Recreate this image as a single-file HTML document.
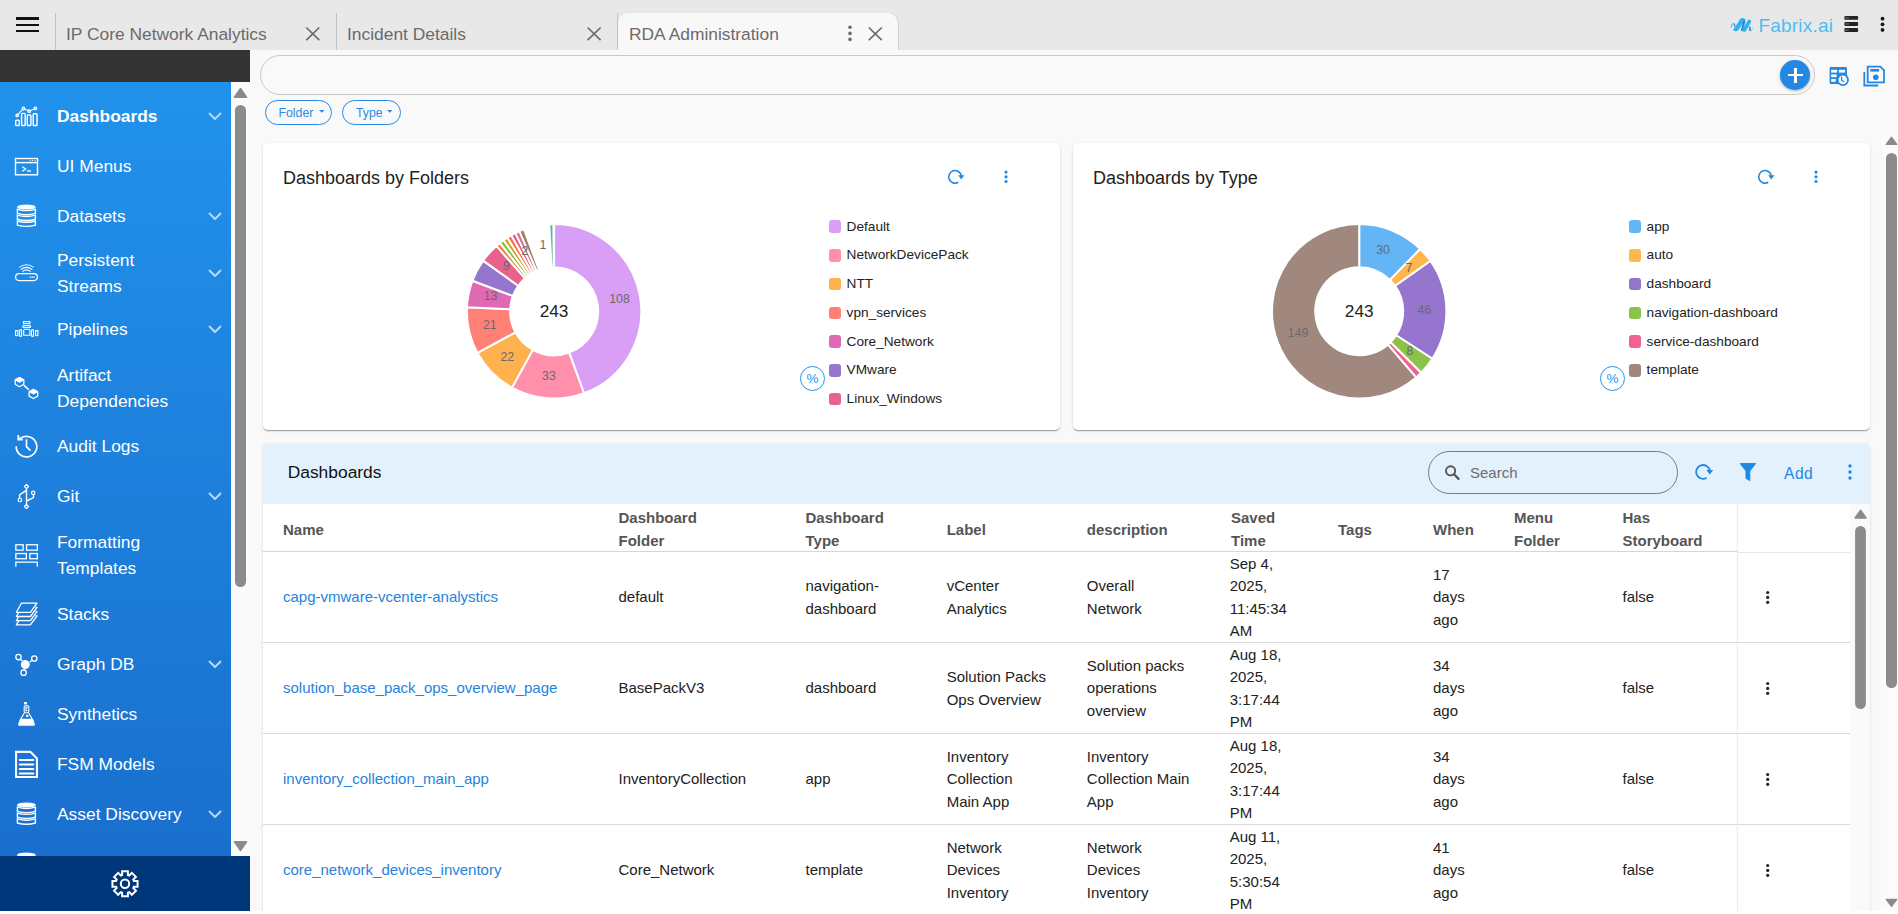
<!DOCTYPE html>
<html><head><meta charset="utf-8">
<style>
*{box-sizing:border-box;margin:0;padding:0}
html,body{width:1898px;height:914px;overflow:hidden;background:#fff;font-family:"Liberation Sans",sans-serif}
.abs{position:absolute}
#top{position:absolute;left:0;top:0;width:1898px;height:50px;background:#e8e8e8}
.hb{position:absolute;left:16px;width:23px;height:2.6px;background:#111}
.sep{position:absolute;top:13px;width:1.2px;height:37px;background:#bfc5ca}
.tabt{position:absolute;top:23.5px;font-size:17.4px;color:#6b6b6b;white-space:nowrap;line-height:20px}
.x{position:absolute;width:14px;height:14px}
#side{position:absolute;left:0;top:50px;width:250px;height:861px;background:#fafafa}
#sdark{position:absolute;left:0;top:50px;width:250px;height:32px;background:#343434}
#sblue{position:absolute;left:0;top:82px;width:231px;height:774px;background:linear-gradient(#2192ec,#1a6fcd)}
#sfoot{position:absolute;left:0;top:856px;width:250px;height:55px;background:#00377a}
.mi{position:absolute;left:57px;color:#fff;font-size:17.4px;line-height:26px;white-space:nowrap}
.chev{position:absolute;left:208px;width:14px;height:8px}
.ic{position:absolute;left:13px}
#content{position:absolute;left:250px;top:50px;width:1648px;height:864px;background:#f9f9f9}
.pill{position:absolute;top:100px;height:25px;border:1.3px solid #2a8be6;border-radius:13px;color:#2a8be6;font-size:12.3px;line-height:25.3px;padding-left:11px}
.card{position:absolute;background:#fff;border-radius:5px;box-shadow:0 2px 1px -1px rgba(0,0,0,.2),0 1px 1px 0 rgba(0,0,0,.14),0 1px 3px 0 rgba(0,0,0,.12)}
.ctitle{position:absolute;font-size:18px;color:#222;white-space:nowrap;line-height:20px}
.leg{position:absolute;font-size:13.65px;color:#222;white-space:nowrap;line-height:17px}
.leg i{position:absolute;left:-17.9px;top:2px;width:12.5px;height:12.5px;border-radius:3px}
.th{position:absolute;font-weight:700;color:#555;font-size:15px;line-height:22.7px;white-space:nowrap}
.td{position:absolute;color:#222;font-size:15px;line-height:22.3px;white-space:nowrap}
.lnk{color:#2583de}
.hl{position:absolute;height:1.5px;background:#e2e2e2}
</style></head>
<body>
<div id="top">
  <div class="hb" style="top:17px"></div>
  <div class="hb" style="top:23.5px"></div>
  <div class="hb" style="top:29.8px"></div>
  <div class="sep" style="left:55px"></div>
  <div class="tabt" style="left:66px">IP Core Network Analytics</div>
  <div class="sep" style="left:335.5px"></div>
  <div class="tabt" style="left:347px">Incident Details</div>
  <div class="sep" style="left:616.5px"></div>
  <div class="abs" style="left:618px;top:13px;width:280px;height:37px;background:#f8f8f8;border-radius:10px 10px 0 0;box-shadow:1px 0 0 #cdd1d5"></div>
  <div class="tabt" style="left:629px">RDA Administration</div>
</div>
<div id="side"></div>
<div id="sdark"></div>
<div id="sblue"></div>
<div class="mi" style="top:103.0px;font-weight:700;">Dashboards</div>
<svg class="chev" style="top:112.0px" viewBox="0 0 14 8"><path d="M1 1L7 7L13 1" fill="none" stroke="#b5dbfa" stroke-width="2"/></svg>
<div class="mi" style="top:153.0px;">UI Menus</div>
<div class="mi" style="top:203.0px;">Datasets</div>
<svg class="chev" style="top:212.0px" viewBox="0 0 14 8"><path d="M1 1L7 7L13 1" fill="none" stroke="#b5dbfa" stroke-width="2"/></svg>
<div class="mi" style="top:247.0px;">Persistent<br>Streams</div>
<svg class="chev" style="top:269.0px" viewBox="0 0 14 8"><path d="M1 1L7 7L13 1" fill="none" stroke="#b5dbfa" stroke-width="2"/></svg>
<div class="mi" style="top:316.0px;">Pipelines</div>
<svg class="chev" style="top:325.0px" viewBox="0 0 14 8"><path d="M1 1L7 7L13 1" fill="none" stroke="#b5dbfa" stroke-width="2"/></svg>
<div class="mi" style="top:362.0px;">Artifact<br>Dependencies</div>
<div class="mi" style="top:433.0px;">Audit Logs</div>
<div class="mi" style="top:483.0px;">Git</div>
<svg class="chev" style="top:492.0px" viewBox="0 0 14 8"><path d="M1 1L7 7L13 1" fill="none" stroke="#b5dbfa" stroke-width="2"/></svg>
<div class="mi" style="top:529.0px;">Formatting<br>Templates</div>
<div class="mi" style="top:601.0px;">Stacks</div>
<div class="mi" style="top:651.0px;">Graph DB</div>
<svg class="chev" style="top:660.0px" viewBox="0 0 14 8"><path d="M1 1L7 7L13 1" fill="none" stroke="#b5dbfa" stroke-width="2"/></svg>
<div class="mi" style="top:701.0px;">Synthetics</div>
<div class="mi" style="top:751.0px;">FSM Models</div>
<div class="mi" style="top:801.0px;">Asset Discovery</div>
<svg class="chev" style="top:810.0px" viewBox="0 0 14 8"><path d="M1 1L7 7L13 1" fill="none" stroke="#b5dbfa" stroke-width="2"/></svg>
<svg class="abs" style="left:0;top:0" width="60" height="914" viewBox="0 0 60 914">
<g fill="none" stroke="#fff" stroke-width="1.4">
<!-- Dashboards -->
<rect x="15.7" y="120.2" width="3.6" height="5.3" rx=".8"/>
<rect x="21.6" y="113.4" width="3.6" height="12.1" rx=".8"/>
<rect x="27.3" y="115" width="3.6" height="10.5" rx=".8"/>
<rect x="33.2" y="113.8" width="3.8" height="11.7" rx=".8"/>
<path d="M17.2 115.4L23.5 108.5L29.2 111.2L35.3 108.4" stroke-width="1.1"/>
<circle cx="17.2" cy="115.4" r="1.2" fill="#2192ec"/><circle cx="23.5" cy="108.5" r="1.2" fill="#2192ec"/><circle cx="29.2" cy="111.2" r="1.2" fill="#2192ec"/><circle cx="35.3" cy="108.4" r="1.2" fill="#2192ec"/>
<!-- UI Menus -->
<rect x="15.5" y="158.5" width="22" height="16.3"/>
<path d="M15.5 162.6H37.5"/>
<path d="M22.3 166.8L25.6 169L22.3 171.2" stroke-width="1.3"/>
<path d="M27 171H31" stroke-width="1.3"/>
<circle cx="30.2" cy="160.6" r=".6" fill="#fff" stroke="none"/><circle cx="32.6" cy="160.6" r=".6" fill="#fff" stroke="none"/><circle cx="35" cy="160.6" r=".6" fill="#fff" stroke="none"/>
<!-- Datasets -->
<ellipse cx="26.4" cy="207.1" rx="9.1" ry="2" fill="#fff" stroke-width="1"/><path d="M17.4 209.30Q26.4 211.90 35.4 209.30V213.40Q26.4 216.00 17.4 213.40Z" stroke-width="1.4"/><path d="M17.4 215.15Q26.4 217.75 35.4 215.15V219.25Q26.4 221.85 17.4 219.25Z" stroke-width="1.4"/><path d="M17.4 221.00Q26.4 223.60 35.4 221.00V225.10Q26.4 227.70 17.4 225.10Z" stroke-width="1.4"/>
<!-- Persistent Streams -->
<rect x="15.6" y="273.6" width="21.8" height="7" rx="3.5" stroke-width="1.2"/>
<rect x="29.7" y="276.5" width="1.3" height="1.3" fill="#fff" stroke="none"/><rect x="31.6" y="276.5" width="1.3" height="1.3" fill="#fff" stroke="none"/><rect x="33.5" y="276.5" width="1.3" height="1.3" fill="#fff" stroke="none"/>
<path d="M19.3 267.4Q26.5 262.2 33.7 267.4" stroke-width="1.1"/>
<path d="M20.7 269.6Q26.5 265.2 32.3 269.6" stroke-width="1.1"/>
<path d="M22.5 271.5Q26.5 268.3 30.5 271.5" stroke-width="1.1"/>
<!-- Pipelines -->
<rect x="15.6" y="330.6" width="2.3" height="5" stroke-width="1.1"/>
<rect x="19.6" y="329.6" width="2" height="6.8" rx="1" stroke-width="1.1"/>
<rect x="31.5" y="329.6" width="2" height="6.8" rx="1" stroke-width="1.1"/>
<rect x="35.6" y="330.6" width="2.3" height="5" stroke-width="1.1"/>
<path d="M23.7 335.3V330.6Q23.7 329.3 25 329.3H28.6Q29.9 329.3 29.9 330.6V335.3Z" stroke-width="1.1"/>
<rect x="23.5" y="321.6" width="6.4" height="2" stroke-width="1.1"/>
<rect x="22.8" y="325.6" width="7.8" height="1.9" rx=".95" stroke-width="1.1"/>
<!-- Artifact Dependencies -->
<path d="M19.50 377.50L23.80 379.90L23.80 384.30L19.50 386.70L15.20 384.30L15.20 379.90Z" stroke-width="1.3" stroke-linejoin="round"/><path d="M19.50 377.50L23.80 379.90L19.50 382.30L15.20 379.90Z" fill="#fff" stroke-width="1"/><path d="M33.40 389.30L37.70 391.70L37.70 396.10L33.40 398.50L29.10 396.10L29.10 391.70Z" stroke-width="1.3" stroke-linejoin="round"/><path d="M33.40 389.30L37.70 391.70L33.40 394.10L29.10 391.70Z" fill="#fff" stroke-width="1"/><path d="M24.3 385.6L28.4 389.3" stroke-width="1.6" stroke-linecap="round"/>
<!-- Audit Logs -->
<path d="M16.2 446.2A10.3 10.3 0 1 0 21.2 437.8" stroke-width="1.7"/>
<path d="M18.3 435.1V439.7H22.8M21.4 437.7L18.8 439.4" stroke-width="1.8"/>
<path d="M26.5 439.3V446.6L30.4 450.6" stroke-width="1.7"/>
<!-- Git -->
<path d="M26.5 488.6V504.4" stroke-width="1.4"/>
<path d="M26.2 490.3L19.6 494.8V498.2" stroke-width="1.4"/>
<path d="M26.5 501L33.5 497.6V494.6" stroke-width="1.4"/>
<path d="M26.5 484.4L28.6 486.5L26.5 488.6L24.4 486.5Z" stroke-width="1.2" stroke-linejoin="round"/>
<path d="M26.5 504.4L28.6 506.5L26.5 508.6L24.4 506.5Z" stroke-width="1.2" stroke-linejoin="round"/>
<circle cx="19.9" cy="500" r="1.75" stroke-width="1.2"/>
<circle cx="33.2" cy="492.8" r="1.75" stroke-width="1.2"/>
<!-- Formatting Templates -->
<rect x="15.85" y="544.75" width="7.3" height="5.4" stroke-width="1.3"/>
<rect x="26.55" y="544.75" width="10.8" height="5.4" stroke-width="1.3"/>
<rect x="15.85" y="553.55" width="10.5" height="5.2" stroke-width="1.3"/>
<rect x="29.85" y="553.55" width="7.5" height="5.2" stroke-width="1.3"/>
<path d="M15.85 566.7V562.1H37.35V566.7" stroke-width="1.3"/>
<!-- Stacks -->
<path d="M21.4 603.2H37L30.4 612.3H16.4Z" stroke-width="1.3" stroke-linejoin="round"/>
<path d="M35.6 607.2L37 607.4L30.4 616.5H16.4L18.7 612.3" stroke-width="1.3" stroke-linejoin="round"/>
<path d="M35.6 611.4L37 611.6L30.4 620.7H16.4L18.7 616.5" stroke-width="1.3" stroke-linejoin="round"/>
<path d="M35.6 615.6L37 615.8L30.4 624.9H16.4L18.7 620.7" stroke-width="1.3" stroke-linejoin="round"/>
<!-- Graph DB -->
<circle cx="25.3" cy="664.6" r="4.5" fill="#fff" stroke="none"/>
<circle cx="18.5" cy="657.1" r="2.7" stroke-width="1.3"/>
<circle cx="34.3" cy="658.5" r="2.7" stroke-width="1.3"/>
<circle cx="23.6" cy="672.7" r="2.7" stroke-width="1.3"/>
<path d="M20.5 659.2L22.5 661.2M32.2 660.1L29.6 662.3M24.3 668.8L24 670" stroke-width="1.3"/>
<!-- Synthetics -->
<rect x="24" y="702" width="2.9" height="2.4" fill="#fff" stroke="none"/>
<rect x="24.2" y="705.8" width="4.6" height="7" rx="1.2" stroke-width="1.1"/>
<path d="M27.6 707.4H26V710.6H27.4" stroke-width="1.1"/>
<path d="M24.3 713L19.3 721.5M28.7 713L33.7 721.5" stroke-width="1.2"/>
<rect x="26.1" y="714.8" width="2.3" height="2.1" fill="#fff" stroke="none"/>
<path d="M20.9 718.8H32.2L34.7 723.4Q35.4 725.7 33.2 725.7H19.7Q17.6 725.7 18.3 723.4Z" fill="#fff" stroke="none"/>
<!-- FSM Models -->
<path d="M16.05 751.85H30.4L36.95 758.4V776.95H16.05Z" stroke-width="2.1" stroke-linejoin="miter"/>
<path d="M19.7 760H33.4M19.7 764.5H33.4M19.7 769H33.4M19.7 773.5H33.4" stroke-width="1.8" stroke-linecap="round"/>
<!-- Asset Discovery -->
<ellipse cx="26.4" cy="805.0" rx="9.1" ry="2" fill="#fff" stroke-width="1"/><path d="M17.4 807.20Q26.4 809.80 35.4 807.20V811.30Q26.4 813.90 17.4 811.30Z" stroke-width="1.4"/><path d="M17.4 813.05Q26.4 815.65 35.4 813.05V817.15Q26.4 819.75 17.4 817.15Z" stroke-width="1.4"/><path d="M17.4 818.90Q26.4 821.50 35.4 818.90V823.00Q26.4 825.60 17.4 823.00Z" stroke-width="1.4"/><ellipse cx="26.4" cy="855.1" rx="9.1" ry="2" fill="#fff" stroke-width="1"/><path d="M17.4 857.30Q26.4 859.90 35.4 857.30V861.40Q26.4 864.00 17.4 861.40Z" stroke-width="1.4"/><path d="M17.4 863.15Q26.4 865.75 35.4 863.15V867.25Q26.4 869.85 17.4 867.25Z" stroke-width="1.4"/><path d="M17.4 869.00Q26.4 871.60 35.4 869.00V873.10Q26.4 875.70 17.4 873.10Z" stroke-width="1.4"/>
</g>
</svg>
<svg class="abs" style="left:231px;top:82px" width="19" height="774" viewBox="0 0 19 774">
<path d="M9.5 6.5L15.5 15.2H3.5Z" fill="#8a8a8a" stroke="#8a8a8a" stroke-width="1.5" stroke-linejoin="round"/>
<rect x="4" y="23" width="11" height="482" rx="5.5" fill="#8b8b8b"/>
<path d="M9.5 768.5L15.5 759.8H3.5Z" fill="#8a8a8a" stroke="#8a8a8a" stroke-width="1.5" stroke-linejoin="round"/>
</svg>
<div id="sfoot"></div>
<svg class="abs" style="left:0;top:856px" width="250" height="55" viewBox="0 856 250 55">
<path d="M122.10 874.96 L122.10 871.23 L127.90 871.23 L127.90 874.96 L129.20 875.50 L131.84 872.86 L135.94 876.96 L133.30 879.60 L133.84 880.90 L137.57 880.90 L137.57 886.70 L133.84 886.70 L133.30 888.00 L135.94 890.64 L131.84 894.74 L129.20 892.10 L127.90 892.64 L127.90 896.37 L122.10 896.37 L122.10 892.64 L120.80 892.10 L118.16 894.74 L114.06 890.64 L116.70 888.00 L116.16 886.70 L112.43 886.70 L112.43 880.90 L116.16 880.90 L116.70 879.60 L114.06 876.96 L118.16 872.86 L120.80 875.50Z" fill="none" stroke="#fff" stroke-width="2" stroke-linejoin="miter"/>
<circle cx="125" cy="883.8" r="4.2" fill="none" stroke="#fff" stroke-width="2"/>
</svg>
<div id="content"></div>
<!--CONTENT-->
<div class="abs" style="left:260px;top:55px;width:1555px;height:40px;border:1px solid #c9c9c9;border-radius:20px"></div>
<div class="abs" style="left:1780px;top:60px;width:30px;height:30px;border-radius:15px;background:#2388e3;box-shadow:0 1px 3px rgba(0,0,0,.3)"></div>
<div class="abs" style="left:1787.7px;top:73.7px;width:15.3px;height:2.7px;background:#fff"></div>
<div class="abs" style="left:1794px;top:68px;width:2.7px;height:14.6px;background:#fff"></div>
<svg class="abs" style="left:1825px;top:62px" width="28" height="28" viewBox="1825 62 28 28">
<rect x="1829.6" y="66.9" width="17.3" height="17" rx="1.2" fill="#2388e3"/>
<g fill="#fff"><rect x="1831.2" y="69.8" width="5.8" height="2.8"/><rect x="1838.8" y="69.8" width="6.2" height="2.8"/><rect x="1831.2" y="74.4" width="5.4" height="2.8"/><rect x="1831.2" y="79" width="4.5" height="2.8"/></g>
<circle cx="1842.8" cy="79.9" r="5.2" fill="#fff" stroke="#2388e3" stroke-width="1.8"/>
<path d="M1841.6 76.4V80.2L1844.3 81.8" fill="none" stroke="#2388e3" stroke-width="1.3"/>
</svg>
<svg class="abs" style="left:1860px;top:62px" width="30" height="28" viewBox="1860 62 30 28">
<g fill="none" stroke="#2388e3" stroke-width="1.8">
<path d="M1864.3 72V85.5H1878.3"/>
<path d="M1867.7 66.7H1880.4L1884 70.3V82.3H1867.7Z"/>
</g>
<rect x="1870.3" y="69" width="8.8" height="2.6" fill="#2388e3"/>
<circle cx="1875.8" cy="77.3" r="2.8" fill="#2388e3"/>
</svg>

<div class="pill" style="left:265px;width:67px;padding-left:12.5px">Folder</div>
<svg class="abs" style="left:318px;top:108.5px" width="8" height="5"><path d="M1 1H6.6L3.8 3.8Z" fill="#2a8be6"/></svg>
<div class="pill" style="left:342px;width:59px;padding-left:13px">Type</div>
<svg class="abs" style="left:385.5px;top:108.5px" width="8" height="5"><path d="M1 1H6.6L3.8 3.8Z" fill="#2a8be6"/></svg>

<div class="card" style="left:263px;top:143px;width:797px;height:287px"></div>
<div class="card" style="left:1073px;top:143px;width:797px;height:287px"></div>
<div class="ctitle" style="left:283px;top:168px">Dashboards by Folders</div>
<div class="ctitle" style="left:1093px;top:168px">Dashboards by Type</div>
<svg class="abs" style="left:944.75px;top:167px" width="20" height="20" viewBox="944.75 167 20 20">
<path d="M958.0 182.3A6.3 6.3 0 1 1 961.0 175.8" fill="none" stroke="#1e88e5" stroke-width="1.6"/>
<path d="M958.0 175.2H964.1L961.0 179.4Z" fill="#1e88e5"/>
</svg>
<svg class="abs" style="left:1002.5px;top:169px" width="6" height="16" viewBox="1002.5 169 6 16"><circle cx="1005.5" cy="172.1" r="1.6" fill="#1e88e5"/><circle cx="1005.5" cy="176.8" r="1.6" fill="#1e88e5"/><circle cx="1005.5" cy="181.5" r="1.6" fill="#1e88e5"/></svg>
<svg class="abs" style="left:1754.75px;top:167px" width="20" height="20" viewBox="1754.75 167 20 20">
<path d="M1768.0 182.3A6.3 6.3 0 1 1 1771.0 175.8" fill="none" stroke="#1e88e5" stroke-width="1.6"/>
<path d="M1768.0 175.2H1774.2L1771.0 179.4Z" fill="#1e88e5"/>
</svg>
<svg class="abs" style="left:1812.5px;top:169px" width="6" height="16" viewBox="1812.5 169 6 16"><circle cx="1815.5" cy="172.1" r="1.6" fill="#1e88e5"/><circle cx="1815.5" cy="176.8" r="1.6" fill="#1e88e5"/><circle cx="1815.5" cy="181.5" r="1.6" fill="#1e88e5"/></svg>
<svg class="abs" style="left:450px;top:210px" width="210" height="200" viewBox="450 210 210 200"><g stroke="#fff" stroke-width="2" stroke-linejoin="round"><path d="M554.10 224.10A87.2 87.2 0 0 1 583.92 393.24L569.15 352.65A44 44 0 0 0 554.10 267.30Z" fill="#d99ef5"/><path d="M583.92 393.24A87.2 87.2 0 0 1 511.96 387.64L532.84 349.82A44 44 0 0 0 569.15 352.65Z" fill="#ff8fab"/><path d="M511.96 387.64A87.2 87.2 0 0 1 477.47 352.91L515.43 332.29A44 44 0 0 0 532.84 349.82Z" fill="#ffb14e"/><path d="M477.47 352.91A87.2 87.2 0 0 1 466.99 307.34L510.15 309.30A44 44 0 0 0 515.43 332.29Z" fill="#ff8075"/><path d="M466.99 307.34A87.2 87.2 0 0 1 472.42 280.76L512.89 295.89A44 44 0 0 0 510.15 309.30Z" fill="#e069b3"/><path d="M472.42 280.76A87.2 87.2 0 0 1 483.11 260.66L518.28 285.75A44 44 0 0 0 512.89 295.89Z" fill="#9575cd"/><path d="M483.11 260.66A87.2 87.2 0 0 1 496.43 245.89L525.00 278.30A44 44 0 0 0 518.28 285.75Z" fill="#e8628d"/><path d="M496.43 245.89A87.2 87.2 0 0 1 499.94 242.96L526.77 276.82A44 44 0 0 0 525.00 278.30Z" fill="#f0883c" stroke-width="1.9"/><path d="M499.94 242.96A87.2 87.2 0 0 1 503.59 240.22L528.61 275.43A44 44 0 0 0 526.77 276.82Z" fill="#7cc444" stroke-width="1.9"/><path d="M503.59 240.22A87.2 87.2 0 0 1 507.38 237.67L530.52 274.15A44 44 0 0 0 528.61 275.43Z" fill="#d6a21e" stroke-width="1.9"/><path d="M507.38 237.67A87.2 87.2 0 0 1 511.29 235.33L532.50 272.97A44 44 0 0 0 530.52 274.15Z" fill="#ff7043" stroke-width="1.9"/><path d="M511.29 235.33A87.2 87.2 0 0 1 515.33 233.19L534.54 271.89A44 44 0 0 0 532.50 272.97Z" fill="#f25592" stroke-width="1.9"/><path d="M515.33 233.19A87.2 87.2 0 0 1 519.47 231.27L536.63 270.92A44 44 0 0 0 534.54 271.89Z" fill="#c8797a" stroke-width="1.9"/><path d="M519.47 231.27A87.2 87.2 0 0 1 523.99 229.46L538.91 270.01A44 44 0 0 0 536.63 270.92Z" fill="#a47a70" stroke-width="1.9"/><path d="M549.23 224.24A87.2 87.2 0 0 1 553.34 224.10L553.72 267.30A44 44 0 0 0 551.64 267.37Z" fill="#5eb5ae" stroke-width="1.9"/></g><g font-family="Liberation Sans" font-size="12.3" fill="#6a6a6a" text-anchor="middle"><text x="619.5" y="303.0">108</text><text x="548.9" y="380.2">33</text><text x="507.3" y="361.4">22</text><text x="489.8" y="329.3">21</text><text x="490.5" y="300.4">13</text><text x="506.4" y="269.5">9</text><text x="525" y="254.9">2</text><text x="543" y="249.4">1</text></g><text x="554.1" y="316.6" font-family="Liberation Sans" font-size="17.2" fill="#222" text-anchor="middle">243</text></svg>
<svg class="abs" style="left:1255px;top:210px" width="210" height="200" viewBox="1255 210 210 200"><g stroke="#fff" stroke-width="2" stroke-linejoin="round"><path d="M1359.20 224.10A87.2 87.2 0 0 1 1420.21 249.00L1389.99 279.86A44 44 0 0 0 1359.20 267.30Z" fill="#64b5f6"/><path d="M1420.21 249.00A87.2 87.2 0 0 1 1430.46 261.04L1395.15 285.94A44 44 0 0 0 1389.99 279.86Z" fill="#ffb74d"/><path d="M1430.46 261.04A87.2 87.2 0 0 1 1432.37 358.74L1396.12 335.24A44 44 0 0 0 1395.15 285.94Z" fill="#9575cd"/><path d="M1432.37 358.74A87.2 87.2 0 0 1 1421.07 372.74L1390.42 342.30A44 44 0 0 0 1396.12 335.24Z" fill="#8bc34a"/><path d="M1421.07 372.74A87.2 87.2 0 0 1 1416.06 377.41L1387.89 344.66A44 44 0 0 0 1390.42 342.30Z" fill="#f06292"/><path d="M1416.06 377.41A87.2 87.2 0 1 1 1359.20 224.10L1359.20 267.30A44 44 0 1 0 1387.89 344.66Z" fill="#a1887f"/></g><g font-family="Liberation Sans" font-size="12.3" fill="#6a6a6a" text-anchor="middle"><text x="1383" y="254.4">30</text><text x="1408.8" y="272.4">7</text><text x="1424.4" y="313.9">46</text><text x="1410" y="355.4">8</text><text x="1298.1" y="337.2">149</text></g><text x="1359.2" y="316.6" font-family="Liberation Sans" font-size="17.2" fill="#222" text-anchor="middle">243</text></svg>
<div class="leg" style="left:846.6px;top:217.50px"><i style="top:2.9px;background:#d99ef5"></i>Default</div>
<div class="leg" style="left:846.6px;top:246.25px"><i style="top:2.9px;background:#ff8fab"></i>NetworkDevicePack</div>
<div class="leg" style="left:846.6px;top:275.00px"><i style="top:2.9px;background:#ffb14e"></i>NTT</div>
<div class="leg" style="left:846.6px;top:303.75px"><i style="top:2.9px;background:#ff8075"></i>vpn_services</div>
<div class="leg" style="left:846.6px;top:332.50px"><i style="top:2.9px;background:#e069b3"></i>Core_Network</div>
<div class="leg" style="left:846.6px;top:361.25px"><i style="top:2.9px;background:#9575cd"></i>VMware</div>
<div class="leg" style="left:846.6px;top:390.00px"><i style="top:2.9px;background:#e8628d"></i>Linux_Windows</div>
<div class="leg" style="left:1646.6px;top:217.50px"><i style="top:2.9px;background:#64b5f6"></i>app</div>
<div class="leg" style="left:1646.6px;top:246.25px"><i style="top:2.9px;background:#ffb74d"></i>auto</div>
<div class="leg" style="left:1646.6px;top:275.00px"><i style="top:2.9px;background:#9575cd"></i>dashboard</div>
<div class="leg" style="left:1646.6px;top:303.75px"><i style="top:2.9px;background:#8bc34a"></i>navigation-dashboard</div>
<div class="leg" style="left:1646.6px;top:332.50px"><i style="top:2.9px;background:#f06292"></i>service-dashboard</div>
<div class="leg" style="left:1646.6px;top:361.25px"><i style="top:2.9px;background:#a1887f"></i>template</div>
<div class="abs" style="left:800.0px;top:365.8px;width:25px;height:25px;border:1px solid #2196f3;border-radius:50%;color:#2196f3;font-size:13.5px;line-height:23px;text-align:center">%</div>
<div class="abs" style="left:1600.0px;top:365.8px;width:25px;height:25px;border:1px solid #2196f3;border-radius:50%;color:#2196f3;font-size:13.5px;line-height:23px;text-align:center">%</div>
<!--/CONTENT-->
<!--TABLE-->
<div class="abs" style="left:263px;top:443px;width:1607px;height:471px;background:#fff;border-radius:5px 5px 0 0;box-shadow:0 2px 1px -1px rgba(0,0,0,.2),0 1px 1px 0 rgba(0,0,0,.14),0 1px 3px 0 rgba(0,0,0,.12)"></div>
<div class="abs" style="left:263px;top:443px;width:1607px;height:60.5px;background:#e3f1fc;border-radius:5px 5px 0 0"></div>
<div class="ctitle" style="left:287.7px;top:462.3px;color:#111;font-size:17.4px">Dashboards</div>
<div class="abs" style="left:1428px;top:451px;width:249.5px;height:43px;border:1.2px solid #7a7a7a;border-radius:21.5px"></div>
<svg class="abs" style="left:1440px;top:460px" width="24" height="24" viewBox="1440 460 24 24"><circle cx="1450.6" cy="470.8" r="4.6" fill="none" stroke="#555" stroke-width="1.9"/><path d="M1454 474.3L1458.6 478.9" stroke="#555" stroke-width="2.2" stroke-linecap="round"/></svg>
<div class="abs" style="left:1470px;top:464.2px;font-size:15px;line-height:18px;color:#6d6d6d">Search</div>
<svg class="abs" style="left:1692px;top:461px" width="22" height="22" viewBox="1692 461 22 22">
<path d="M1706.6 477.8A6.9 6.9 0 1 1 1709.8 470.8" fill="none" stroke="#1e88e5" stroke-width="1.8"/>
<path d="M1706.3 470.1H1713.2L1709.8 474.6Z" fill="#1e88e5"/></svg>
<svg class="abs" style="left:1738px;top:461px" width="20" height="22" viewBox="1738 461 20 22"><path d="M1740.2 463.6H1755.6L1749.8 471V480.6L1746 478.4V471Z" fill="#1e88e5" stroke="#1e88e5" stroke-width="1" stroke-linejoin="round"/></svg>
<div class="abs" style="left:1784px;top:464.5px;font-size:15.6px;line-height:18px;color:#1e88e5;letter-spacing:.5px">Add</div>
<svg class="abs" style="left:1846px;top:462px" width="8" height="20" viewBox="1846 462 8 20"><circle cx="1850" cy="466" r="1.7" fill="#1e88e5"/><circle cx="1850" cy="472" r="1.7" fill="#1e88e5"/><circle cx="1850" cy="478" r="1.7" fill="#1e88e5"/></svg>
<div class="th" style="left:283px;top:518.95px">Name</div>
<div class="th" style="left:618.5px;top:506.80px">Dashboard<br>Folder</div>
<div class="th" style="left:805.5px;top:506.80px">Dashboard<br>Type</div>
<div class="th" style="left:946.7px;top:518.95px">Label</div>
<div class="th" style="left:1086.8px;top:518.95px">description</div>
<div class="th" style="left:1231px;top:506.80px">Saved<br>Time</div>
<div class="th" style="left:1338px;top:518.95px">Tags</div>
<div class="th" style="left:1433px;top:518.95px">When</div>
<div class="th" style="left:1514px;top:506.80px">Menu<br>Folder</div>
<div class="th" style="left:1622.5px;top:506.80px">Has<br>Storyboard</div>
<div class="hl" style="left:263px;top:551px;width:1474.5px;height:1px;background:#d6d6d6"></div>
<div class="hl" style="left:1737.5px;top:552px;width:112.5px;height:1px;background:#e8e8e8"></div>
<div class="hl" style="left:263px;top:642px;width:1587px;height:1px;background:#d9d9d9"></div>
<div class="hl" style="left:263px;top:733px;width:1587px;height:1px;background:#d9d9d9"></div>
<div class="hl" style="left:263px;top:824px;width:1587px;height:1px;background:#d9d9d9"></div>
<div class="abs" style="left:1737px;top:503.5px;width:1px;height:410px;background:#ededed;box-shadow:-1px 0 1px rgba(0,0,0,.025)"></div>
<div class="td lnk" style="left:283px;top:586.45px">capg-vmware-vcenter-analystics</div>
<div class="td" style="left:618.5px;top:586.45px">default</div>
<div class="td" style="left:805.5px;top:575.30px">navigation-<br>dashboard</div>
<div class="td" style="left:946.7px;top:575.30px">vCenter<br>Analytics</div>
<div class="td" style="left:1086.8px;top:575.30px">Overall<br>Network</div>
<div class="td" style="left:1229.7px;top:553.00px">Sep 4,<br>2025,<br>11:45:34<br>AM</div>
<div class="td" style="left:1433px;top:564.15px">17<br>days<br>ago</div>
<div class="td" style="left:1622.5px;top:586.45px">false</div>
<svg class="abs" style="left:1764px;top:588.0px" width="8" height="18" viewBox="0 0 8 18"><circle cx="3.7" cy="4.5" r="1.6" fill="#222"/><circle cx="3.7" cy="9.4" r="1.6" fill="#222"/><circle cx="3.7" cy="14.3" r="1.6" fill="#222"/></svg>
<div class="td lnk" style="left:283px;top:677.45px">solution_base_pack_ops_overview_page</div>
<div class="td" style="left:618.5px;top:677.45px">BasePackV3</div>
<div class="td" style="left:805.5px;top:677.45px">dashboard</div>
<div class="td" style="left:946.7px;top:666.30px">Solution Packs<br>Ops Overview</div>
<div class="td" style="left:1086.8px;top:655.15px">Solution packs<br>operations<br>overview</div>
<div class="td" style="left:1229.7px;top:644.00px">Aug 18,<br>2025,<br>3:17:44<br>PM</div>
<div class="td" style="left:1433px;top:655.15px">34<br>days<br>ago</div>
<div class="td" style="left:1622.5px;top:677.45px">false</div>
<svg class="abs" style="left:1764px;top:679.0px" width="8" height="18" viewBox="0 0 8 18"><circle cx="3.7" cy="4.5" r="1.6" fill="#222"/><circle cx="3.7" cy="9.4" r="1.6" fill="#222"/><circle cx="3.7" cy="14.3" r="1.6" fill="#222"/></svg>
<div class="td lnk" style="left:283px;top:768.45px">inventory_collection_main_app</div>
<div class="td" style="left:618.5px;top:768.45px">InventoryCollection</div>
<div class="td" style="left:805.5px;top:768.45px">app</div>
<div class="td" style="left:946.7px;top:746.15px">Inventory<br>Collection<br>Main App</div>
<div class="td" style="left:1086.8px;top:746.15px">Inventory<br>Collection Main<br>App</div>
<div class="td" style="left:1229.7px;top:735.00px">Aug 18,<br>2025,<br>3:17:44<br>PM</div>
<div class="td" style="left:1433px;top:746.15px">34<br>days<br>ago</div>
<div class="td" style="left:1622.5px;top:768.45px">false</div>
<svg class="abs" style="left:1764px;top:770.0px" width="8" height="18" viewBox="0 0 8 18"><circle cx="3.7" cy="4.5" r="1.6" fill="#222"/><circle cx="3.7" cy="9.4" r="1.6" fill="#222"/><circle cx="3.7" cy="14.3" r="1.6" fill="#222"/></svg>
<div class="td lnk" style="left:283px;top:859.45px">core_network_devices_inventory</div>
<div class="td" style="left:618.5px;top:859.45px">Core_Network</div>
<div class="td" style="left:805.5px;top:859.45px">template</div>
<div class="td" style="left:946.7px;top:837.15px">Network<br>Devices<br>Inventory</div>
<div class="td" style="left:1086.8px;top:837.15px">Network<br>Devices<br>Inventory</div>
<div class="td" style="left:1229.7px;top:826.00px">Aug 11,<br>2025,<br>5:30:54<br>PM</div>
<div class="td" style="left:1433px;top:837.15px">41<br>days<br>ago</div>
<div class="td" style="left:1622.5px;top:859.45px">false</div>
<svg class="abs" style="left:1764px;top:861.0px" width="8" height="18" viewBox="0 0 8 18"><circle cx="3.7" cy="4.5" r="1.6" fill="#222"/><circle cx="3.7" cy="9.4" r="1.6" fill="#222"/><circle cx="3.7" cy="14.3" r="1.6" fill="#222"/></svg>
<div class="abs" style="left:1850px;top:503.5px;width:20px;height:411px;background:#fafafa"></div>
<svg class="abs" style="left:1850px;top:503px" width="20" height="411" viewBox="1850 503 20 411"><path d="M1860.6 510.2L1866.2 518H1855Z" fill="#8a8a8a" stroke="#8a8a8a" stroke-width="1.3" stroke-linejoin="round"/><rect x="1855.1" y="526" width="10.8" height="183" rx="5.4" fill="#8b8b8b"/></svg>
<!--/TABLE-->
<!--EXTRA-->
<svg class="abs" style="left:300px;top:20px" width="30" height="26" viewBox="300 20 30 26"><path d="M306.3 27.5L319.3 40.2M319.3 27.5L306.3 40.2" stroke="#6b6b6b" stroke-width="1.7"/></svg>
<svg class="abs" style="left:580px;top:20px" width="30" height="26" viewBox="580 20 30 26"><path d="M587.6 27.5L600.6 40.2M600.6 27.5L587.6 40.2" stroke="#6b6b6b" stroke-width="1.7"/></svg>
<svg class="abs" style="left:840px;top:20px" width="50" height="26" viewBox="840 20 50 26"><circle cx="850" cy="27.3" r="1.8" fill="#6b6b6b"/><circle cx="850" cy="33.4" r="1.8" fill="#6b6b6b"/><circle cx="850" cy="39.4" r="1.8" fill="#6b6b6b"/><path d="M868.8 27.5L881.8 40.2M881.8 27.5L868.8 40.2" stroke="#6b6b6b" stroke-width="1.7"/></svg>
<svg class="abs" style="left:1728px;top:14px" width="28" height="22" viewBox="1728 14 28 22">
<path d="M1733 30L1740.6 18.5Q1742.6 17.2 1745.8 19.4L1738 30.6Q1735.5 32.2 1733 30Z" fill="#2fb3f0"/>
<path d="M1744.6 20.6L1741.6 30.8" stroke="#2a7fd2" stroke-width="2" fill="none"/>
<path d="M1741.4 30.8L1748.3 19.8Q1750.6 19 1751.3 21.8L1745.8 31.2Q1743.4 32.4 1741.4 30.8Z" fill="#2fb3f0"/>
<path d="M1749.7 26.6L1750.2 31" stroke="#2a7fd2" stroke-width="1.5" fill="none"/>
<path d="M1750.8 31Q1752.8 30 1752.6 27.6" stroke="#8fd3f5" stroke-width="1" fill="none"/>
<path d="M1731.2 27.6Q1731 24.2 1734.6 23.3" stroke="#6cc6f2" stroke-width="1.4" fill="none"/>
<path d="M1734.4 23.8L1734.8 26.6" stroke="#2a7fd2" stroke-width="1.2" fill="none"/>
</svg>
<div class="abs" style="left:1758.5px;top:14.7px;font-size:19px;line-height:22px;color:#4cbdf4;letter-spacing:.2px">Fabrix.ai</div>
<svg class="abs" style="left:1842px;top:14px" width="20" height="20" viewBox="1842 14 20 20">
<rect x="1844.4" y="15.9" width="13.7" height="3.9" rx=".9" fill="#222"/>
<rect x="1844.4" y="22" width="13.7" height="3.9" rx=".9" fill="#222"/>
<rect x="1844.4" y="28.1" width="13.7" height="3.9" rx=".9" fill="#222"/>
<g fill="#aaa"><rect x="1845.6" y="17.3" width="1.1" height="1.1"/><rect x="1847.5" y="17.3" width="1.1" height="1.1"/><rect x="1845.6" y="23.4" width="1.1" height="1.1"/><rect x="1847.5" y="23.4" width="1.1" height="1.1"/><rect x="1845.6" y="29.5" width="1.1" height="1.1"/><rect x="1847.5" y="29.5" width="1.1" height="1.1"/></g>
</svg>
<svg class="abs" style="left:1876px;top:14px" width="14" height="20" viewBox="1876 14 14 20"><circle cx="1882.5" cy="18.7" r="1.9" fill="#1a1a1a"/><circle cx="1882.5" cy="24.3" r="1.9" fill="#1a1a1a"/><circle cx="1882.5" cy="29.9" r="1.9" fill="#1a1a1a"/></svg>
<div class="abs" style="left:1882px;top:130px;width:16px;height:784px;background:#fbfbfb"></div>
<svg class="abs" style="left:1870px;top:130px" width="28" height="784" viewBox="1870 130 28 784">
<path d="M1891.5 137.2L1896.8 144.4H1886.2Z" fill="#8a8a8a" stroke="#8a8a8a" stroke-width="1.2" stroke-linejoin="round"/>
<rect x="1886" y="153" width="11" height="535" rx="5.5" fill="#8b8b8b"/>
<path d="M1891.5 906.5L1896.8 899.3H1886.2Z" fill="#8a8a8a" stroke="#8a8a8a" stroke-width="1.2" stroke-linejoin="round"/>
</svg>
<div class="abs" style="left:0;top:911px;width:1898px;height:3px;background:#fff"></div>

<!--/EXTRA-->
</body></html>
